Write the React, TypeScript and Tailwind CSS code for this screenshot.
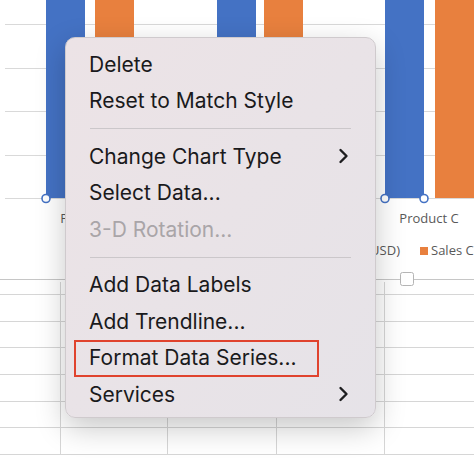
import React from 'react';

const font = { fontFamily: 'Inter, "Open Sans", "Liberation Sans", sans-serif' };

type Item = { label: string; disabled?: boolean; submenu?: boolean; boxed?: boolean } | 'sep';

const items: Item[] = [
  { label: 'Delete' },
  { label: 'Reset to Match Style' },
  'sep',
  { label: 'Change Chart Type', submenu: true },
  { label: 'Select Data...' },
  { label: '3-D Rotation...', disabled: true },
  'sep',
  { label: 'Add Data Labels' },
  { label: 'Add Trendline...' },
  { label: 'Format Data Series...', boxed: true },
  { label: 'Services', submenu: true },
];

function Chevron() {
  return (
    <svg width="12" height="16" viewBox="0 0 12 16" className="shrink-0">
      <polyline points="2.5,2 8.5,8 2.5,14" fill="none" stroke="#1d1d1f" strokeWidth="2.4" strokeLinecap="round" strokeLinejoin="round" />
    </svg>
  );
}

function Chart() {
  const grid = [24, 68, 111, 155, 198];
  const blue = [46, 217, 385];
  const orange = [95, 264, 435];
  return (
    <svg width="474" height="282" className="block" overflow="visible">
      {grid.map((y) => (
        <line key={y} x1="5" x2="474" y1={y + 0.5} y2={y + 0.5} stroke="#d9d9d9" strokeWidth="1" />
      ))}
      {blue.map((x) => (
        <rect key={x} x={x} y="0" width="39" height="198" fill="#4472c4" />
      ))}
      {orange.map((x) => (
        <rect key={x} x={x} y="0" width="39" height="198" fill="#e8803e" />
      ))}
      {blue.map((x) => (
        <g key={'h' + x}>
          <circle cx={x} cy="198.5" r="4" fill="#fff" stroke="#4472c4" strokeWidth="1.6" />
          <circle cx={x + 39} cy="198.5" r="4" fill="#fff" stroke="#4472c4" strokeWidth="1.6" />
        </g>
      ))}
      <g style={{ fontFamily: '"Open Sans", "Liberation Sans", sans-serif' }} fontSize="13" fill="#595959">
        <text x="90" y="223" textAnchor="middle">Product A</text>
        <text x="429" y="223" textAnchor="middle">Product C</text>
        <text x="400" y="255" textAnchor="end">Sales B (USD)</text>
        <rect x="420" y="247" width="8" height="8" fill="#e8803e" />
        <text x="431" y="255">Sales C</text>
      </g>
      <line x1="0" x2="474" y1="279.5" y2="279.5" stroke="#c6c6c6" strokeWidth="1" />
      <rect x="400.5" y="272.5" width="13" height="13" rx="2" fill="#fff" stroke="#b5b5b5" strokeWidth="1" />
    </svg>
  );
}

function Sheet() {
  const rows = [13, 27, 26, 27, 27, 26, 27];
  return (
    <div className="flex flex-col">
      {rows.map((h, i) => (
        <div
          key={i}
          className="grid grid-cols-[61px_107px_109px_108px_1fr] border-b border-[#d6d6d6]"
          style={{ height: h }}
        >
          <div className="border-r border-[#d6d6d6]" />
          <div className="border-r border-[#d6d6d6]" />
          <div className="border-r border-[#d6d6d6]" />
          <div className="border-r border-[#d6d6d6]" />
          <div />
        </div>
      ))}
    </div>
  );
}

export default function App() {
  return (
    <div className="relative w-[474px] h-[459px] overflow-hidden bg-white" style={font}>
      <Chart />
      <Sheet />

      {/* context menu */}
      <div className="absolute left-[65px] top-[37px] w-[311px] h-[381px] rounded-[10px] border border-[#cfcacd] bg-gradient-to-br from-[#ece3e6] to-[#e6e3e8] shadow-[0_10px_30px_rgba(0,0,0,0.22)] pt-[8px] pb-[7px]">
        {items.map((it, i) =>
          it === 'sep' ? (
            <div key={i} className="h-[19px] flex items-center px-[24px]">
              <div className="h-px w-full bg-[#cbc7ca]" />
            </div>
          ) : (
            <div key={i} className="relative h-[36.5px] flex items-center justify-between pl-[23px] pr-[25px]">
              {it.boxed && (
                <div className="absolute left-[8px] top-0 w-[245px] h-[37px] border-2 border-[#e0432e]" />
              )}
              <span className={`text-[21px] leading-none ${it.disabled ? 'text-[#a9a5a8]' : 'text-[#1a1a1c]'}`}>
                {it.label}
              </span>
              {it.submenu && <Chevron />}
            </div>
          )
        )}
      </div>
    </div>
  );
}
